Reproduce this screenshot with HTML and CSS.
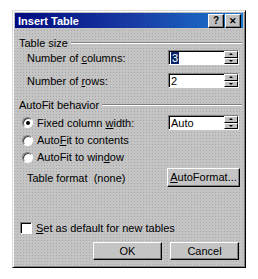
FILE: index.html
```html
<!DOCTYPE html>
<html lang="en">
<head>
    <meta charset="UTF-8">
    <meta name="viewport" content="width=device-width, initial-scale=1.0">
    <title>Insert Table</title>
    <link rel="stylesheet" href="styles.css">
</head>
<body>
    <div class="dialog">
        <div class="titlebar">
            <span class="title">Insert Table</span>
            <span class="tbtn">?</span>
            <span class="tbtn close">&#x2715;</span>
        </div>

        <div class="group-head h-first"><span>Table size</span><i class="etch"></i></div>
        <div class="row r-cols">
            <span class="label">Number of <u>c</u>olumns:</span>
            <div class="spin"><span class="field"><b class="sel">3</b></span><span class="arrows"><i class="up"></i><i class="down"></i></span></div>
        </div>
        <div class="row r-rows">
            <span class="label">Number of <u>r</u>ows:</span>
            <div class="spin"><span class="field">2</span><span class="arrows"><i class="up"></i><i class="down"></i></span></div>
        </div>

        <div class="group-head h-second"><span>AutoFit behavior</span><i class="etch"></i></div>
        <div class="row r-fixed">
            <span class="opt"><i class="radio on"></i><span>Fixed column <u>w</u>idth:</span></span>
            <div class="spin"><span class="field">Auto</span><span class="arrows"><i class="up"></i><i class="down"></i></span></div>
        </div>
        <div class="row r-opt">
            <span class="opt"><i class="radio"></i><span>Auto<u>F</u>it to contents</span></span>
        </div>
        <div class="row r-opt">
            <span class="opt"><i class="radio"></i><span>AutoFit to win<u>d</u>ow</span></span>
        </div>
        <div class="row r-format">
            <span class="label">Table format&nbsp;&nbsp;(none)</span>
            <span class="btn wide"><u>A</u>utoFormat...</span>
        </div>

        <div class="row r-check">
            <span class="opt"><i class="check"></i><span><u>S</u>et as default for new tables</span></span>
        </div>
        <div class="row r-buttons">
            <span class="btn">OK</span>
            <span class="btn">Cancel</span>
        </div>
    </div>
</body>
</html>
```

FILE: styles.css
```css
body {
    margin: 0;
    background: #fff;
    font-family: "Liberation Sans", Arial, sans-serif;
    font-size: 11px;
    color: #000;
}
.dialog {
    margin: 10px 0 0 12px;
    width: 230px;
    height: 254px;
    padding: 1px;
    background-color: #c4c4c4;
    background-image: radial-gradient(circle, #a8a8a8 0.7px, transparent 0.9px);
    background-size: 3px 3px;
    border: 1px solid;
    border-color: #d8d8d8 #000 #000 #d8d8d8;
    box-shadow: inset 1px 1px 0 #fff, inset -1px -1px 0 #808080;
    display: flex;
    flex-direction: column;
}
.titlebar {
    height: 15px;
    margin: 1px 1px 0 1px;
    background: linear-gradient(to right, #000a80, #1a3fa6 55%, #1a78d0);
    display: flex;
    align-items: center;
    padding: 0 2px 0 3px;
}
.title {
    flex: 1;
    color: #fff;
    font-weight: bold;
    font-size: 11px;
}
.tbtn {
    width: 16px;
    height: 14px;
    box-sizing: border-box;
    margin-left: 1px;
    background: #c0c0c0;
    border: 1px solid;
    border-color: #fff #000 #000 #fff;
    box-shadow: inset -1px -1px 0 #808080;
    font-size: 10px;
    font-weight: bold;
    line-height: 12px;
    text-align: center;
}
.tbtn.close {
    font-size: 9px;
}
.group-head {
    height: 14px;
    display: flex;
    align-items: center;
    padding-left: 5px;
    padding-right: 2px;
}
.group-head .etch {
    flex: 1;
    height: 0;
    border-top: 1px solid #808080;
    border-bottom: 1px solid #fff;
    margin-left: 3px;
}
.h-first { margin-top: 8px; }
.h-second { margin-top: 10px; }
.row {
    display: flex;
    align-items: center;
    justify-content: space-between;
    padding: 0 5px 0 13px;
}
.r-cols { height: 15px; }
.r-rows { height: 15px; margin-top: 8px; }
.r-fixed { height: 15px; margin-top: 3px; padding-left: 8px; }
.r-opt { height: 14px; margin-top: 3px; padding-left: 8px; }
.r-format { height: 19px; margin-top: 4px; padding-right: 4px; }
.r-check { height: 14px; margin-top: 34px; padding-left: 6px; }
.r-buttons {
    height: 18px;
    margin-top: 7px;
    justify-content: flex-end;
    gap: 8px;
    padding-right: 5px;
}
.spin {
    width: 71px;
    height: 15px;
    box-sizing: border-box;
    background: #fff;
    border: 1px solid;
    border-color: #808080 #fff #fff #808080;
    box-shadow: inset 1px 1px 0 #000;
    display: flex;
}
.spin .field {
    flex: 1;
    padding: 1px 0 0 2px;
    line-height: 12px;
}
.sel {
    font-weight: normal;
    background: #0a246a;
    color: #fff;
    padding: 0 1px;
}
.arrows {
    width: 14px;
    display: flex;
    flex-direction: column;
}
.arrows i {
    flex: 1;
    background: #c0c0c0;
    border: 1px solid;
    border-color: #fff #000 #000 #fff;
    position: relative;
}
.arrows i::after {
    content: "";
    position: absolute;
    left: 4px;
    top: 1px;
    border-left: 2px solid transparent;
    border-right: 2px solid transparent;
}
.arrows .up::after { border-bottom: 2px solid #000; }
.arrows .down::after { border-top: 2px solid #000; }
.opt {
    display: flex;
    align-items: center;
}
.radio {
    width: 11px;
    height: 11px;
    box-sizing: border-box;
    border-radius: 50%;
    background: #fff;
    border: 1px solid;
    border-color: #808080 #fff #fff #808080;
    box-shadow: inset 1px 1px 0 #404040;
    margin-right: 4px;
    position: relative;
}
.radio.on::after {
    content: "";
    position: absolute;
    left: 3px;
    top: 3px;
    width: 4px;
    height: 4px;
    border-radius: 50%;
    background: #000;
}
.check {
    width: 12px;
    height: 12px;
    box-sizing: border-box;
    background: #fff;
    border: 1px solid;
    border-color: #808080 #fff #fff #808080;
    box-shadow: inset 1px 1px 0 #000;
    margin-right: 4px;
}
.btn {
    width: 69px;
    height: 18px;
    box-sizing: border-box;
    background: #c4c4c4;
    border: 1px solid;
    border-color: #fff #000 #000 #fff;
    box-shadow: inset -1px -1px 0 #808080;
    text-align: center;
    line-height: 16px;
}
.btn.wide {
    width: 73px;
    height: 19px;
    line-height: 17px;
}
```
